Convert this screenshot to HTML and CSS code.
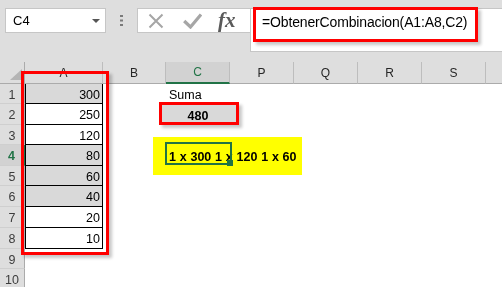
FILE: index.html
```html
<!DOCTYPE html>
<html lang="es">
<head>
<meta charset="utf-8">
<title>Excel - ObtenerCombinacion</title>
<link rel="stylesheet" href="styles.css">
</head>
<body>
<div class="app">
  <div class="topbar">
    <div class="namebox"><span class="nb-text">C4</span><span class="nb-arrow"></span></div>
    <div class="grip">
      <svg width="3" height="11" viewBox="0 0 3 11"><rect x="0" y="0" width="3" height="2"/><rect x="0" y="4.5" width="3" height="2"/><rect x="0" y="9" width="3" height="2"/></svg>
    </div>
    <div class="fxbox">
      <svg class="ic-x" width="16" height="16" viewBox="0 0 16 16"><path d="M1.5 1.5 L14.5 14.5 M14.5 1.5 L1.5 14.5"/></svg>
      <svg class="ic-check" width="19" height="16" viewBox="0 0 19 16"><polyline points="1.2,8 7.5,14 18,1.5"/></svg>
      <span class="fx">fx</span>
    </div>
    <div class="formula"><span>=ObtenerCombinacion(A1:A8,C2)</span></div>
  </div>

  <div class="sheet">
    <div class="corner"><svg width="12" height="11" viewBox="0 0 12 11"><polygon points="12,0 12,11 0,11"/></svg></div>
    <div class="ch">A</div><div class="ch">B</div><div class="ch sel">C</div><div class="ch">P</div><div class="ch">Q</div><div class="ch">R</div><div class="ch">S</div><div class="ch"></div>

    <div class="rh">1</div><div class="c a g">300</div><div class="c"></div><div class="c t">Suma</div><div class="c"></div><div class="c"></div><div class="c"></div><div class="c"></div><div class="c"></div>
    <div class="rh">2</div><div class="c a">250</div><div class="c"></div><div class="c t b ctr">480</div><div class="c"></div><div class="c"></div><div class="c"></div><div class="c"></div><div class="c"></div>
    <div class="rh">3</div><div class="c a">120</div><div class="c"></div><div class="c"></div><div class="c"></div><div class="c"></div><div class="c"></div><div class="c"></div><div class="c"></div>
    <div class="rh sel">4</div><div class="c a g">80</div><div class="c"></div><div class="c t b combo">1 x 300 1 x 120 1 x 60</div><div class="c"></div><div class="c"></div><div class="c"></div><div class="c"></div><div class="c"></div>
    <div class="rh">5</div><div class="c a g">60</div><div class="c"></div><div class="c"></div><div class="c"></div><div class="c"></div><div class="c"></div><div class="c"></div><div class="c"></div>
    <div class="rh">6</div><div class="c a g">40</div><div class="c"></div><div class="c"></div><div class="c"></div><div class="c"></div><div class="c"></div><div class="c"></div><div class="c"></div>
    <div class="rh">7</div><div class="c a">20</div><div class="c"></div><div class="c"></div><div class="c"></div><div class="c"></div><div class="c"></div><div class="c"></div><div class="c"></div>
    <div class="rh">8</div><div class="c a">10</div><div class="c"></div><div class="c"></div><div class="c"></div><div class="c"></div><div class="c"></div><div class="c"></div><div class="c"></div>
    <div class="rh">9</div><div class="c"></div><div class="c"></div><div class="c"></div><div class="c"></div><div class="c"></div><div class="c"></div><div class="c"></div><div class="c"></div>
    <div class="rh">10</div><div class="c"></div><div class="c"></div><div class="c"></div><div class="c"></div><div class="c"></div><div class="c"></div><div class="c"></div><div class="c"></div>
  </div>

  <div class="mark mark-formula"></div>
  <div class="mark mark-cola"></div>
  <div class="mark mark-sum"></div>
  <div class="highlight"></div>
  <div class="selection"><span class="handle"></span></div>
</div>
</body>
</html>
```

FILE: styles.css
```css
* { box-sizing: border-box; }
html, body { margin: 0; padding: 0; }
body {
  width: 502px;
  height: 287px;
  overflow: hidden;
  background: #fff;
  font-family: "Liberation Sans", Arial, sans-serif;
}
.app {
  position: relative;
  width: 502px;
  height: 287px;
  overflow: hidden;
}

/* ---------- formula bar ---------- */
.topbar {
  height: 62px;
  background: #dedede;
  display: flex;
  align-items: flex-start;
  padding-top: 8px;
}
.namebox {
  margin-left: 5px;
  width: 101px;
  height: 25px;
  background: #fff;
  border: 1px solid #c6c6c6;
  display: flex;
  align-items: center;
  justify-content: space-between;
  padding: 0 5px 0 7px;
  font-size: 13px;
  color: #000;
}
.nb-arrow {
  width: 0;
  height: 0;
  border-left: 4px solid transparent;
  border-right: 4px solid transparent;
  border-top: 4px solid #555;
}
.grip {
  width: 31px;
  height: 25px;
  display: flex;
  align-items: center;
  justify-content: center;
}
.grip svg { fill: #7a7a7a; }
.fxbox {
  width: 113px;
  height: 25px;
  background: #fff;
  border: 1px solid #c6c6c6;
  border-right: 0;
  display: flex;
  align-items: center;
}
.ic-x { margin-left: 10px; }
.ic-x path { stroke: #a6a6a6; stroke-width: 2; fill: none; }
.ic-check { margin-left: 19px; }
.ic-check polyline { stroke: #a6a6a6; stroke-width: 3.2; fill: none; }
.fx {
  margin-left: 16px;
  font-family: "Liberation Serif", "Times New Roman", serif;
  font-style: italic;
  font-weight: bold;
  font-size: 21px;
  line-height: 1;
  color: #5a5a5a;
}
.formula {
  flex: 1;
  margin-right: -6px;
  height: 44px;
  background: #fff;
  border: 1px solid #c6c6c6;
  padding: 4px 0 0 11px;
  font-size: 14px;
  line-height: 18px;
  letter-spacing: -0.15px;
  color: #000;
  white-space: nowrap;
}

/* ---------- sheet ---------- */
.sheet {
  display: grid;
  grid-template-columns: 25px 78px 63px 64px 64px 64px 64px 64px 64px;
  grid-template-rows: 22px 20px 21px 20px 21px 20px 21px 21px 21px 20px 21px;
  width: 550px;
  font-size: 12.5px;
  color: #000;
}
.corner {
  background: #dedede;
  border-right: 1px solid #ababab;
  border-bottom: 1px solid #ababab;
  display: flex;
  align-items: flex-end;
  justify-content: flex-end;
  padding: 0 2px 3px 0;
}
.corner svg { fill: #b4b4b4; }
.ch {
  background: #dedede;
  border-right: 1px solid #bdbdbd;
  border-bottom: 1px solid #ababab;
  display: flex;
  align-items: center;
  justify-content: center;
  font-size: 12px;
  color: #262626;
}
.ch.sel {
  background: #d2d2d2;
  color: #217346;
  border-bottom: 2px solid #217346;
}
.rh {
  background: #dedede;
  border-right: 1px solid #ababab;
  border-bottom: 1px solid #cfcfcf;
  display: flex;
  align-items: center;
  justify-content: center;
  padding-top: 2px;
  color: #3c3c3c;
}
.rh.sel {
  background: #d2d2d2;
  color: #217346;
  font-weight: bold;
  border-right: 2px solid #217346;
}
.c {
  display: flex;
  align-items: center;
  padding-top: 2px;
  white-space: nowrap;
}
.t { padding-left: 3px; }
.b { font-weight: bold; }
.combo { word-spacing: 0.3px; }
.ctr { justify-content: center; padding-left: 0; }
.a {
  justify-content: flex-end;
  padding-right: 2px;
  background: #fff;
  border-left: 1px solid #000;
  border-right: 1px solid #000;
  border-bottom: 1px solid #000;
}
.a.g { background: #d9d9d9; }

/* ---------- annotations drawn over the sheet ---------- */
.mark {
  position: absolute;
  border: 3px solid #ff0000;
  box-shadow: 3px 3px 3px rgba(0, 0, 0, 0.22);
}
.mark-formula { left: 253px; top: 7px; width: 225px; height: 35px; }
.mark-cola { left: 21px; top: 71px; width: 88px; height: 184px; }
.mark-sum {
  left: 159px; top: 102px; width: 80px; height: 23px;
  background: #d9d9d9;
  mix-blend-mode: multiply;
}
.highlight {
  position: absolute;
  left: 153px; top: 137px; width: 149px; height: 38px;
  background: #ffff00;
  mix-blend-mode: multiply;
}
.selection {
  position: absolute;
  left: 165px; top: 142px; width: 67px; height: 23px;
  border: 2px solid #217346;
}
.handle {
  position: absolute;
  right: -3px; bottom: -3px;
  width: 6px; height: 6px;
  background: #217346;
}
```
